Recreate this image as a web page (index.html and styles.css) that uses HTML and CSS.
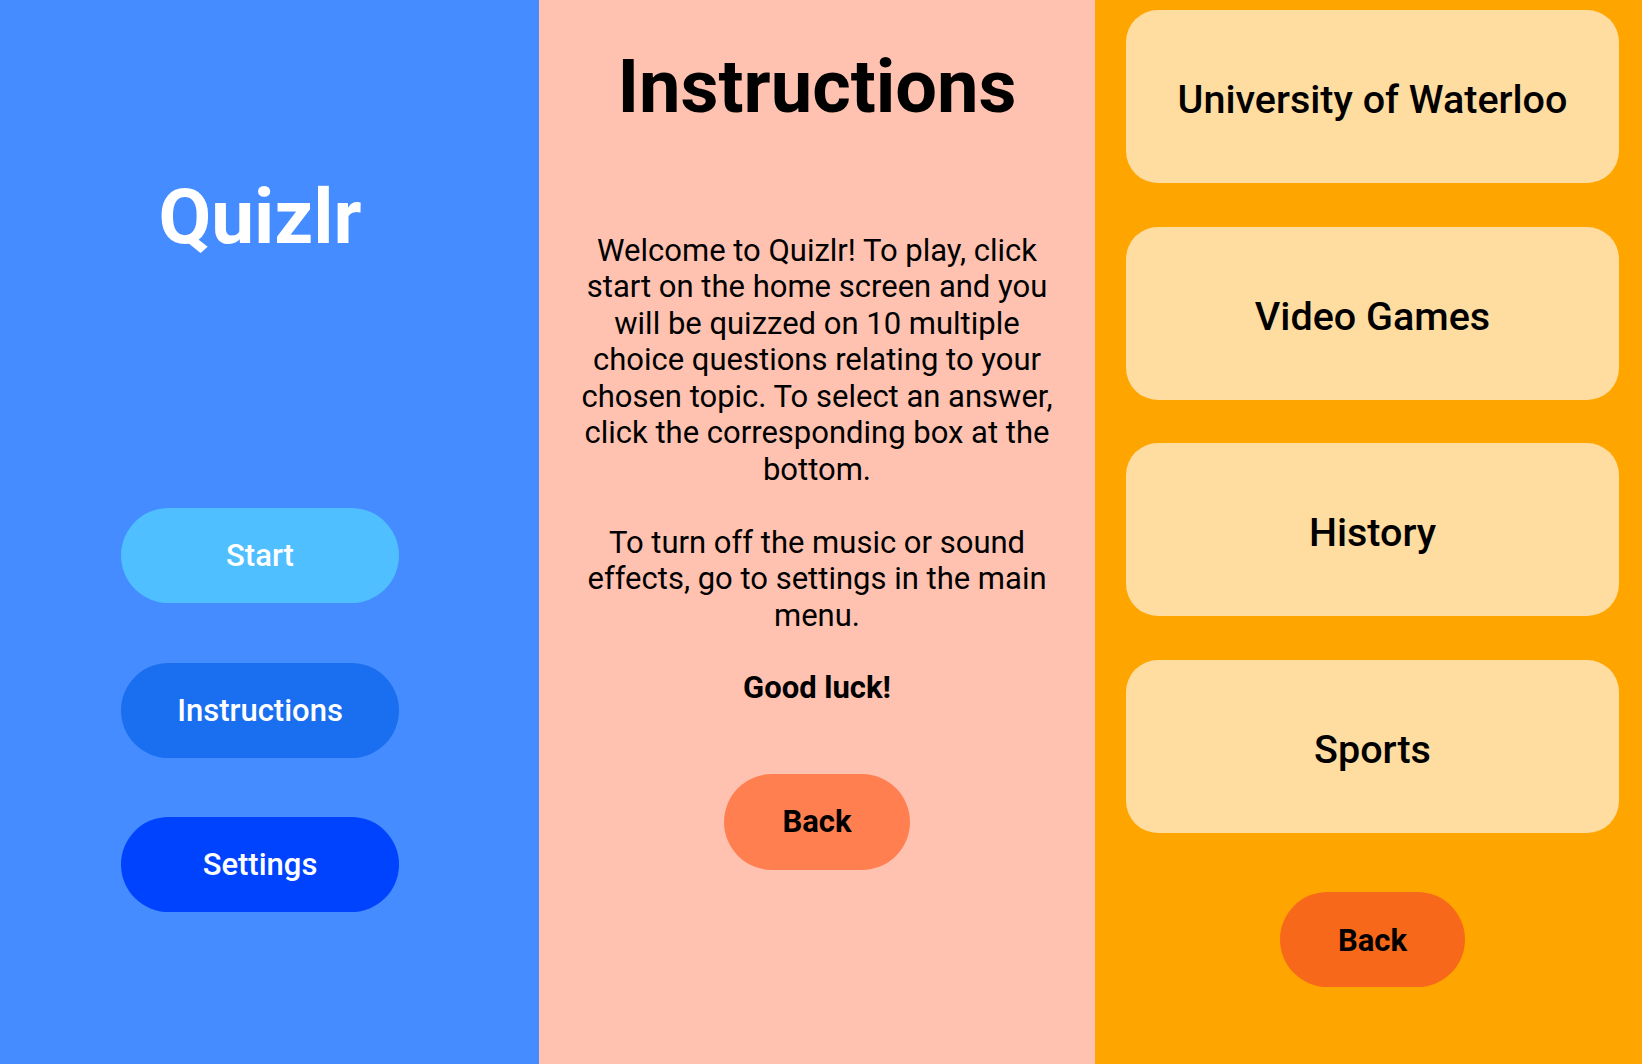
FILE: index.html
```html
<!DOCTYPE html>
<html lang="en">
<head>
<meta charset="utf-8">
<title>Quizlr</title>
<link rel="stylesheet" href="styles.css">
</head>
<body>
<div class="screens">
  <section class="col home">
    <h1 class="logo">Quizlr</h1>
    <div class="menu">
      <button class="pill menu-btn start">Start</button>
      <button class="pill menu-btn instr">Instructions</button>
      <button class="pill menu-btn settings">Settings</button>
    </div>
  </section>
  <section class="col help">
    <h2 class="help-title">Instructions</h2>
    <p class="help-text">Welcome to Quizlr! To play, click start on the home screen and you will be quizzed on 10 multiple choice questions relating to your chosen topic. To select an answer, click the corresponding box at the bottom.

To turn off the music or sound effects, go to settings in the main menu.</p>
    <p class="luck">Good luck!</p>
    <button class="pill back back-coral">Back</button>
  </section>
  <section class="col topics">
    <button class="topic">University of Waterloo</button>
    <button class="topic">Video Games</button>
    <button class="topic">History</button>
    <button class="topic">Sports</button>
    <button class="pill back back-orange">Back</button>
  </section>
</div>
</body>
</html>
```

FILE: styles.css
```css
* { box-sizing: border-box; }
html, body {
  margin: 0;
  padding: 0;
  width: 1642px;
  height: 1064px;
  overflow: hidden;
  font-family: Roboto, "Noto Sans", "Liberation Sans", sans-serif;
}
.screens {
  display: flex;
  width: 1642px;
  height: 1064px;
}
.col {
  display: flex;
  flex-direction: column;
  align-items: center;
  height: 100%;
}
button {
  font-family: inherit;
  border: none;
  cursor: pointer;
  padding: 0;
}
.pill {
  border-radius: 999px;
  display: flex;
  align-items: center;
  justify-content: center;
}

/* Home */
.home {
  width: 539px;
  background: #448cff;
  padding-right: 19px;
}
.logo {
  margin: 175px 0 0;
  font-size: 76.5px;
  line-height: 84px;
  font-weight: 700;
  color: #ffffff;
}
.menu {
  margin-top: 249px;
  display: flex;
  flex-direction: column;
  gap: 59.5px;
}
.menu-btn {
  width: 278px;
  height: 95px;
  font-size: 31px;
  font-weight: 500;
  color: #ffffff;
}
.start { background: #4fbfff; }
.instr { background: #1a6ff0; }
.settings { background: #0043ff; }

/* Instructions */
.help {
  width: 556px;
  background: #ffc2b0;
  color: #000;
}
.help-title {
  margin: 45px 0 0;
  font-size: 74px;
  line-height: 84px;
  font-weight: 700;
}
.help-text {
  margin: 103.5px 0 0;
  width: 490px;
  font-size: 31px;
  line-height: 36.5px;
  text-align: center;
  white-space: pre-line;
}
.luck {
  margin: 36px 0 0;
  font-size: 31px;
  line-height: 36.5px;
  font-weight: 700;
}
.back {
  width: 186px;
  height: 96px;
  font-size: 31px;
  font-weight: 700;
  color: #000;
}
.back-coral {
  margin-top: 67px;
  background: #ff7f50;
}

/* Topics */
.topics {
  width: 547px;
  background: #ffa500;
  padding: 10px 23px 0 31px;
  gap: 43.7px;
}
.topic {
  width: 493px;
  height: 173px;
  flex: none;
  border-radius: 32px;
  background: #ffdc9f;
  color: #000;
  font-size: 39.5px;
  font-weight: 500;
  padding-top: 6px;
}
.back-orange {
  flex: none;
  margin-top: 15px;
  height: 95px;
  width: 185px;
  background: #f8681a;
  padding-top: 2px;
}
```
